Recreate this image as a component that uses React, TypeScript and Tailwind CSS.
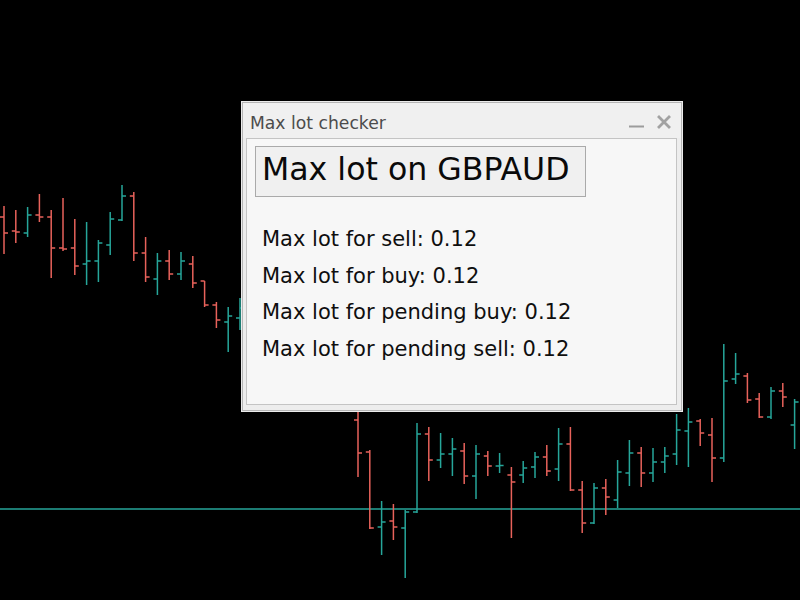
import React from "react";

type Bar = [number, number, number, number]; // open, high, low, close (screen y)

const BARS: Bar[] = [
  [217, 206, 254, 233],
  [231, 210, 243, 232],
  [233, 207, 237, 215],
  [215, 194, 222, 217],
  [217, 210, 278, 248],
  [248, 198, 251, 249],
  [248, 219, 275, 266],
  [264, 222, 285, 261],
  [261, 240, 282, 243],
  [245, 212, 255, 219],
  [220, 185, 221, 196],
  [196, 192, 261, 253],
  [253, 237, 282, 277],
  [279, 253, 295, 261],
  [261, 250, 280, 274],
  [274, 252, 280, 261],
  [264, 256, 288, 283],
  [281, 281, 307, 305],
  [305, 302, 328, 320],
  [322, 307, 352, 316],
  [318, 298, 330, 308],
  [310, 300, 330, 325],
  [325, 315, 345, 335],
  [335, 320, 350, 328],
  [328, 325, 360, 355],
  [355, 340, 370, 345],
  [345, 342, 380, 372],
  [372, 360, 390, 385],
  [385, 370, 398, 380],
  [380, 375, 405, 400],
  [420, 395, 477, 453],
  [452, 450, 529, 528],
  [527, 501, 555, 522],
  [521, 504, 540, 527],
  [528, 510, 578, 512],
  [512, 423, 513, 434],
  [434, 427, 481, 460],
  [460, 433, 468, 454],
  [454, 438, 476, 449],
  [451, 443, 484, 476],
  [476, 445, 499, 454],
  [456, 451, 476, 466],
  [466, 453, 473, 465.5],
  [475, 467, 538, 482],
  [475, 461, 483, 468],
  [467, 452, 478, 457],
  [457, 445, 476, 471],
  [469, 428, 481, 444],
  [444, 427, 491, 490],
  [490, 481, 533, 523],
  [523, 483, 524, 488],
  [488, 479, 515, 497],
  [500, 460, 508, 472],
  [473, 440, 486, 453],
  [453, 447, 487, 473],
  [473, 448, 482, 462],
  [462, 447, 473, 456],
  [454, 414, 465, 430],
  [431, 408, 467, 422],
  [421, 419, 446, 433],
  [435, 418, 482, 458],
  [458, 344, 462, 381],
  [379, 353, 384, 374],
  [376, 373, 403, 400],
  [399, 393, 418, 417],
  [417, 387, 419, 391],
  [391, 383, 407, 397],
  [425, 399, 449, 402],
];

const UP = "#26a69a";
const DOWN = "#e8625b";

function Chart() {
  return (
    <svg
      className="absolute inset-0"
      width={800}
      height={600}
      viewBox="0 0 800 600"
    >
      <line x1={0} y1={509} x2={800} y2={509} stroke={UP} strokeWidth={1.6} />
      {BARS.map(([o, h, l, c], i) => {
        const x = 4 + 11.8 * i;
        const col = c <= o ? UP : DOWN;
        return (
          <g key={i} stroke={col} strokeWidth={1.5}>
            <line x1={x} y1={h} x2={x} y2={l} />
            <line x1={x - 4} y1={o} x2={x} y2={o} />
            <line x1={x} y1={c} x2={x + 4} y2={c} />
          </g>
        );
      })}
    </svg>
  );
}

export default function App() {
  const lines = [
    "Max lot for sell: 0.12",
    "Max lot for buy: 0.12",
    "Max lot for pending buy: 0.12",
    "Max lot for pending sell: 0.12",
  ];
  return (
    <div className="relative w-[800px] h-[600px] bg-black overflow-hidden">
      <Chart />
      <div className="absolute left-[241px] top-[101px] w-[442px] h-[311px] border border-[#ececec] font-['DejaVu_Sans',sans-serif]">
        <div className="flex h-full flex-col border border-[#b5b5b5] bg-[#ededed]">
          <div className="flex h-[35px] shrink-0 items-start bg-[#f0f0f0]">
            <span className="pl-[7px] pt-[10px] text-[17.2px] leading-[20px] text-[#4c4c4c]">
              Max lot checker
            </span>
            <div className="ml-auto mr-[10px] mt-[12px] flex items-start gap-[12px]">
              <svg width={16} height={14} viewBox="0 0 16 14">
                <line x1={0} y1={11.5} x2={15} y2={11.5} stroke="#9c9c9c" strokeWidth={2} />
              </svg>
              <svg width={14} height={14} viewBox="0 0 14 14">
                <path
                  d="M2 2 L12 12 M12 2 L2 12"
                  stroke="#a2a2a2"
                  strokeWidth={2.8}
                  strokeLinecap="square"
                />
              </svg>
            </div>
          </div>
          <div className="ml-[3px] mr-[4px] mb-[5px] flex-1 border border-[#c4c4c4] bg-[#f7f7f7] px-[8px] pt-[7px]">
            <div className="w-[331px] h-[51px] border border-[#aaaaaa] bg-[#f0f0f0] pl-[6px] pt-[4px] text-[31.6px] leading-[36px] text-[#0a0a0a]">
              Max lot on GBPAUD
            </div>
            <div className="mt-[24px] ml-[7px] flex flex-col text-[21px] leading-[36.67px] text-[#0f0f0f]">
              {lines.map((t) => (
                <div key={t}>{t}</div>
              ))}
            </div>
          </div>
        </div>
      </div>
    </div>
  );
}
